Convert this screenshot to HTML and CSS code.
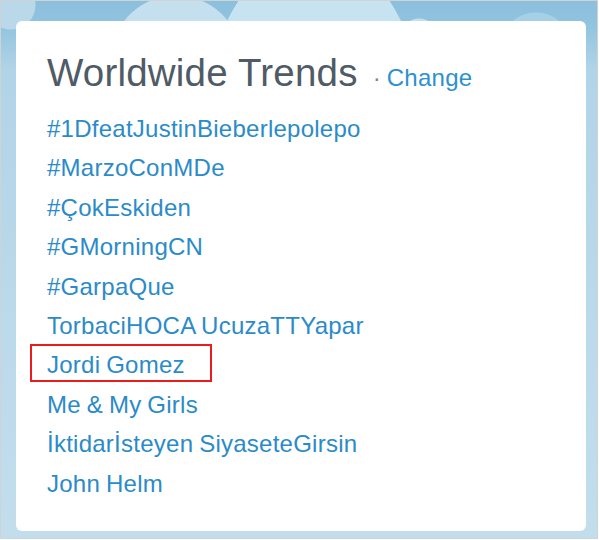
FILE: index.html
```html
<!DOCTYPE html>
<html lang="en">
<head>
<meta charset="utf-8">
<title>Worldwide Trends</title>
<link rel="stylesheet" href="styles.css">
</head>
<body>
<div class="frame">
  <section class="trends">
    <header class="trends-head">
      <h3 class="trends-title">Worldwide Trends</h3>
      <span class="trends-sep">·</span>
      <a class="trends-change" href="#">Change</a>
    </header>
    <ul class="trend-list">
      <li><a href="#">#1DfeatJustinBieberlepolepo</a></li>
      <li><a href="#">#MarzoConMDe</a></li>
      <li><a href="#">#ÇokEskiden</a></li>
      <li><a href="#">#GMorningCN</a></li>
      <li><a href="#">#GarpaQue</a></li>
      <li><a href="#">TorbaciHOCA UcuzaTTYapar</a></li>
      <li class="is-marked"><a href="#">Jordi Gomez</a></li>
      <li><a href="#">Me &amp; My Girls</a></li>
      <li><a href="#">İktidarİsteyen SiyaseteGirsin</a></li>
      <li><a href="#">John Helm</a></li>
    </ul>
  </section>
</div>
</body>
</html>
```

FILE: styles.css
```css
html, body {
  margin: 0;
  padding: 0;
  background: #ffffff;
}

/* page backdrop: sky blue with soft clouds along the top */
.frame {
  width: 598px;
  height: 539px;
  box-sizing: border-box;
  border: 1px solid #cfd3d6;
  padding: 20px 0 0 15px;
  background-color: #bcdaea;
  background-image:
    radial-gradient(circle at 10px 4px, #b9d9ea 0 24px, transparent 25px),
    radial-gradient(circle at 175px 60px, #c4e0ef 0 65px, transparent 66px),
    radial-gradient(ellipse 115px 200px at 313px 150px, #c7e2f0 0 99.5%, transparent 100%),
    radial-gradient(circle at 418px 36px, #c3dfee 0 18px, transparent 19px),
    radial-gradient(circle at 535px 48px, #a6d0e6 0 36px, transparent 37px),
    linear-gradient(to bottom, #8bbfdc 0, #90c3de 22px, #b2d4e8 70px, #c2deed 100%);
}

.trends {
  width: 570px;
  height: 510px;
  box-sizing: border-box;
  background: #ffffff;
  border-radius: 6px;
  padding: 28px 0 0 31px;
  font-family: "Liberation Sans", Arial, sans-serif;
}

.trends-head {
  display: flex;
  align-items: baseline;
  height: 60px;
}

.trends-title {
  margin: 0;
  font-size: 38.5px;
  font-weight: normal;
  color: #4f5b66;
  line-height: 48px;
  letter-spacing: 0.2px;
}

.trends-sep {
  margin-left: 15px;
  font-size: 24px;
  color: #7a858d;
}

.trends-change {
  margin-left: 6px;
  font-size: 24px;
  letter-spacing: 0.3px;
  color: #2b91cf;
  text-decoration: none;
}

.trend-list {
  list-style: none;
  margin: 0;
  padding: 0;
}

.trend-list li {
  line-height: 39.4px;
  font-size: 24px;
  letter-spacing: 0.25px;
  word-spacing: -1px;
}

.trend-list a {
  color: #2b8bc9;
  text-decoration: none;
}

.trend-list .is-marked {
  position: relative;
}

/* red highlight box around one trend */
.trend-list .is-marked::after {
  content: "";
  position: absolute;
  left: -17px;
  top: -1px;
  width: 178px;
  height: 34px;
  border: 2px solid #ea1c1c;
}
```
